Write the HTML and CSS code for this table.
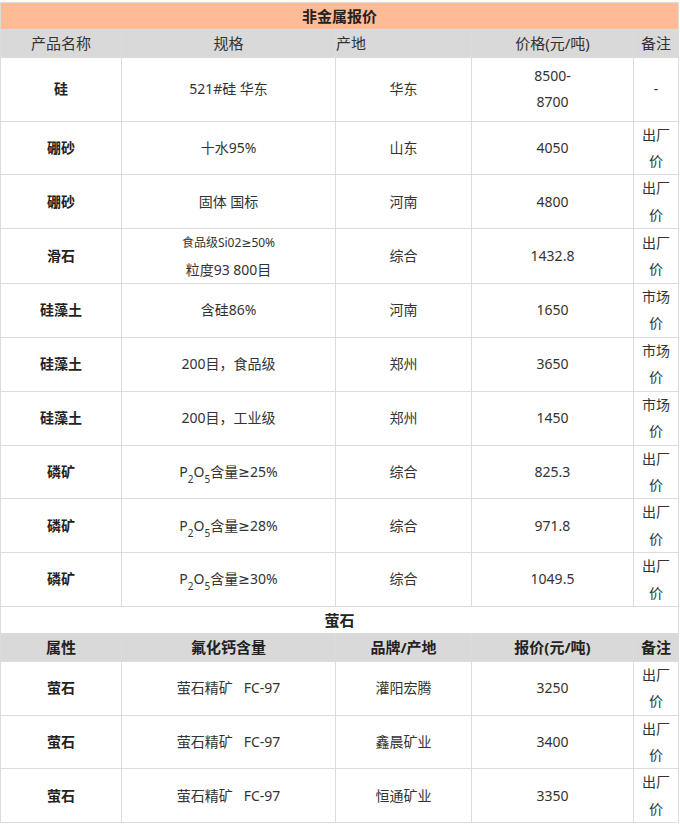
FILE: index.html
```html
<!DOCTYPE html>
<html lang="zh-CN">
<head>
<meta charset="utf-8">
<title>非金属报价</title>
<link rel="stylesheet" href="styles.css">
</head>
<body>
<table class="price-table">
  <colgroup>
    <col class="c1"><col class="c2"><col class="c3"><col class="c4"><col class="c5">
  </colgroup>
  <tbody>
    <tr class="title-row"><td colspan="5">非金属报价</td></tr>
    <tr class="head-row">
      <td>产品名称</td><td>规格</td><td class="left">产地</td><td>价格(元/吨)</td><td>备注</td>
    </tr>
    <tr class="tall-row">
      <td class="name">硅</td><td>521#硅 华东</td><td>华东</td><td>8500-<br>8700</td><td>-</td>
    </tr>
    <tr><td class="name">硼砂</td><td>十水95%</td><td>山东</td><td>4050</td><td>出厂价</td></tr>
    <tr><td class="name">硼砂</td><td>固体 国标</td><td>河南</td><td>4800</td><td>出厂价</td></tr>
    <tr><td class="name">滑石</td><td><span class="small">食品级Si02<span class="sym">≥</span>50%</span><br>粒度93 800目</td><td>综合</td><td>1432.8</td><td>出厂价</td></tr>
    <tr><td class="name">硅藻土</td><td>含硅86%</td><td>河南</td><td>1650</td><td>市场价</td></tr>
    <tr><td class="name">硅藻土</td><td>200目，食品级</td><td>郑州</td><td>3650</td><td>市场价</td></tr>
    <tr><td class="name">硅藻土</td><td>200目，工业级</td><td>郑州</td><td>1450</td><td>市场价</td></tr>
    <tr><td class="name">磷矿</td><td>P<sub>2</sub>O<sub>5</sub>含量<span class="sym">≥</span>25%</td><td>综合</td><td>825.3</td><td>出厂价</td></tr>
    <tr><td class="name">磷矿</td><td>P<sub>2</sub>O<sub>5</sub>含量<span class="sym">≥</span>28%</td><td>综合</td><td>971.8</td><td>出厂价</td></tr>
    <tr><td class="name">磷矿</td><td>P<sub>2</sub>O<sub>5</sub>含量<span class="sym">≥</span>30%</td><td>综合</td><td>1049.5</td><td>出厂价</td></tr>
    <tr class="sub-title-row"><td colspan="5">萤石</td></tr>
    <tr class="head-row bold">
      <td>属性</td><td>氟化钙含量</td><td>品牌/产地</td><td>报价(元/吨)</td><td>备注</td>
    </tr>
    <tr><td class="name">萤石</td><td>萤石精矿&nbsp;&nbsp; FC-97</td><td>灌阳宏腾</td><td>3250</td><td>出厂价</td></tr>
    <tr><td class="name">萤石</td><td>萤石精矿&nbsp;&nbsp; FC-97</td><td>鑫晨矿业</td><td>3400</td><td>出厂价</td></tr>
    <tr><td class="name">萤石</td><td>萤石精矿&nbsp;&nbsp; FC-97</td><td>恒通矿业</td><td>3350</td><td>出厂价</td></tr>
  </tbody>
</table>
</body>
</html>
```

FILE: styles.css
```css
html, body {
  margin: 0;
  padding: 0;
  background: #fff;
}

body {
  padding-top: 2px;
  font-family: "Noto Sans", "Noto Sans CJK SC", sans-serif;
  font-size: 14px;
  color: #333;
}

.price-table {
  border-collapse: collapse;
  table-layout: fixed;
  width: 678px;
}

.c1 { width: 121px; }
.c2 { width: 214px; }
.c3 { width: 136px; }
.c4 { width: 162px; }
.c5 { width: 45px; }

.price-table td {
  border: 1px solid #dcdcdc;
  padding: 0 3px;
  line-height: 26.4px;
  text-align: center;
  vertical-align: middle;
  word-break: break-all;
}

.title-row td {
  background: #ffbb96;
  font-weight: bold;
  font-size: 15px;
  color: #222;
}

.sub-title-row td {
  font-weight: bold;
  font-size: 15px;
  color: #222;
}

.head-row td {
  background: #d9d9d9;
  font-size: 15px;
  color: #333;
}

.head-row.bold td {
  font-weight: bold;
  color: #222;
}

.head-row td.left {
  text-align: left;
  padding-left: 0;
}

.tall-row td {
  padding-top: 5px;
  padding-bottom: 5px;
}

.price-table td.name {
  font-weight: bold;
  color: #222;
}

.small {
  font-size: 12px;
}

.sym {
  font-family: "DejaVu Sans", "Liberation Sans", sans-serif;
}

sub {
  font-size: 10px;
  vertical-align: -6px;
  line-height: 0;
}
```
